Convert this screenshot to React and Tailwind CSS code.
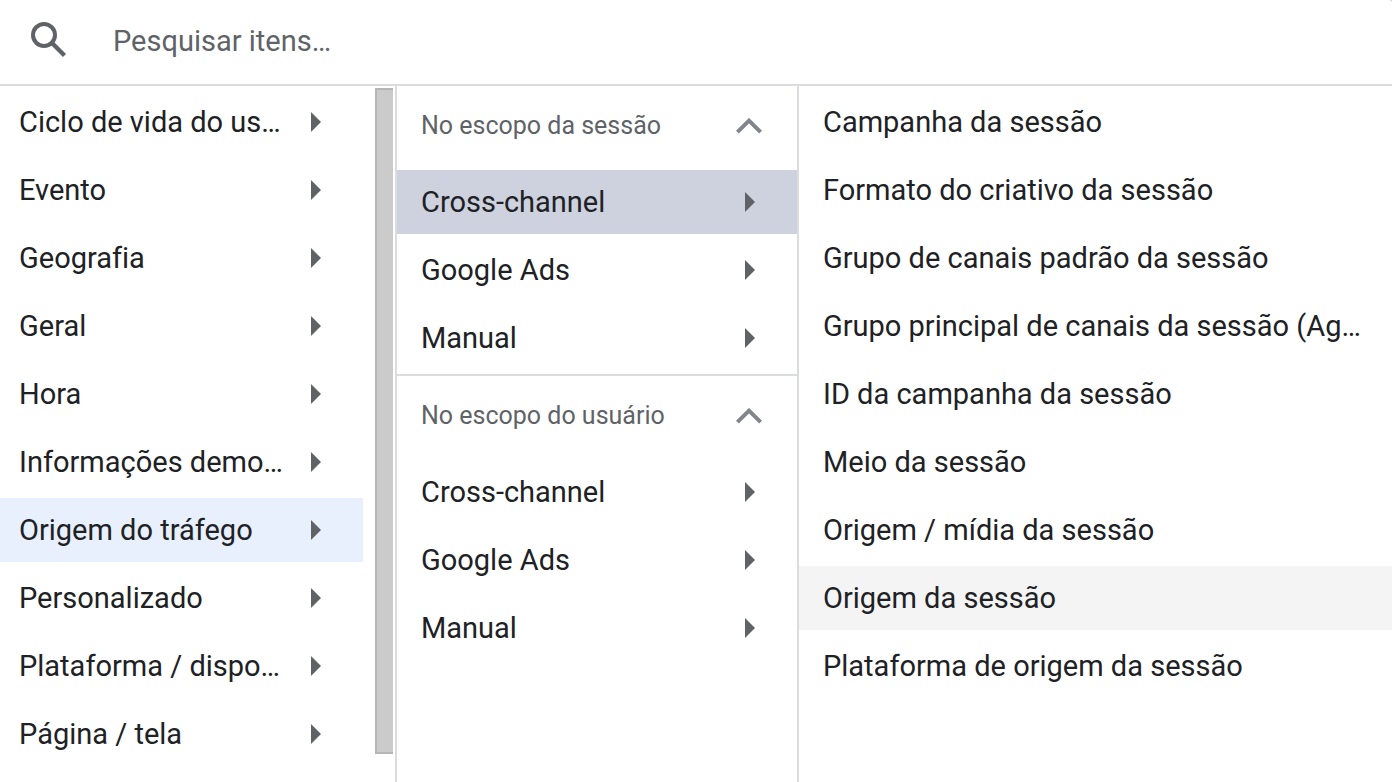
const categories = [
  'Ciclo de vida do usuário',
  'Evento',
  'Geografia',
  'Geral',
  'Hora',
  'Informações demográficas',
  'Origem do tráfego',
  'Personalizado',
  'Plataforma / dispositivo',
  'Página / tela',
];

const scopes = [
  { title: 'No escopo da sessão', active: 'Cross-channel' },
  { title: 'No escopo do usuário', active: null },
];
const sources = ['Cross-channel', 'Google Ads', 'Manual'];

const dimensions = [
  'Campanha da sessão',
  'Formato do criativo da sessão',
  'Grupo de canais padrão da sessão',
  'Grupo principal de canais da sessão (Agrupamento padrão)',
  'ID da campanha da sessão',
  'Meio da sessão',
  'Origem / mídia da sessão',
  'Origem da sessão',
  'Plataforma de origem da sessão',
];

function Arrow() {
  return (
    <svg className="h-5 w-3 shrink-0" viewBox="0 0 12 20" fill="#5f6368" aria-hidden="true">
      <path d="M0 0 10 10 0 20Z" />
    </svg>
  );
}

function Chevron() {
  return (
    <svg className="h-4 w-7 shrink-0" viewBox="0 0 28 16" fill="none" stroke="#80868b" strokeWidth="4" aria-hidden="true">
      <path d="M2.400 14.200 14 2.700 25.600 14.200" />
    </svg>
  );
}

export default function App() {
  return (
    <div className="bg-[#dadce0]">
      <div className="flex h-screen flex-col overflow-hidden rounded-tr bg-white font-['Roboto',sans-serif] text-[29px] leading-8 text-[#202124] [font-variant-ligatures:none]">
        <label className="flex h-[86px] shrink-0 items-center border-b-2 border-[#dadce0] pb-0.5 pl-[25px]">
          <svg className="mb-0.5 size-12 shrink-0" viewBox="0 0 24 24" fill="none" stroke="#5f6368" strokeWidth="2" aria-hidden="true">
            <circle cx="9.500" cy="9.500" r="5.500" />
            <path d="M13.400 13.400 19.750 19.750" strokeWidth="2.200" />
          </svg>
          <input
            type="text"
            aria-label="Pesquisar itens"
            placeholder="Pesquisar itens…"
            className="ml-10 min-w-0 flex-1 outline-none placeholder:text-[#5f6368]"
          />
        </label>
        <div className="flex min-h-0 flex-1">
          <nav className="flex w-[397px] shrink-0 border-r-2 border-[#dadce0]">
            <ul className="flex min-w-0 flex-1 flex-col gap-1 pt-1">
              {categories.map((name) => (
                <li key={name}>
                  <button
                    type="button"
                    className={`flex h-16 w-full items-center pr-10 pl-[19px] text-left ${name === 'Origem do tráfego' ? 'bg-[#e8f0fe]' : ''}`}
                  >
                    <span className="mr-7 min-w-0 flex-1 truncate">{name}</span>
                    <Arrow />
                  </button>
                </li>
              ))}
            </ul>
            <div className="mt-0.5 mr-0.5 ml-3 h-[666px] w-[18px] border-2 border-r-0 border-[#b5b5b5] bg-[#cbcbcb]" />
          </nav>
          <div className="w-[402px] shrink-0 border-r-2 border-[#dadce0]">
            {scopes.map(({ title, active }, i) => (
              <section key={title} className={i > 0 ? 'border-t-2 border-[#dadce0]' : ''}>
                <button type="button" className="flex h-20 w-full items-center justify-between pr-[34px] pl-6 text-[25px] text-[#5f6368]">
                  {title}
                  <Chevron />
                </button>
                <ul className="flex flex-col gap-1 pt-1 pb-1">
                  {sources.map((name) => (
                    <li key={name}>
                      <button
                        type="button"
                        className={`flex h-16 w-full items-center justify-between pr-10 pl-6 ${name === active ? 'bg-[#ced2df]' : ''}`}
                      >
                        {name}
                        <Arrow />
                      </button>
                    </li>
                  ))}
                </ul>
              </section>
            ))}
          </div>
          <ul className="flex min-w-0 flex-1 flex-col gap-1 pt-1">
            {dimensions.map((name) => (
              <li key={name}>
                <button
                  type="button"
                  className={`h-16 w-full truncate pr-6 pl-6 text-left ${name === 'Origem da sessão' ? 'bg-[#f4f4f4]' : ''}`}
                >
                  {name}
                </button>
              </li>
            ))}
          </ul>
        </div>
      </div>
    </div>
  );
}
